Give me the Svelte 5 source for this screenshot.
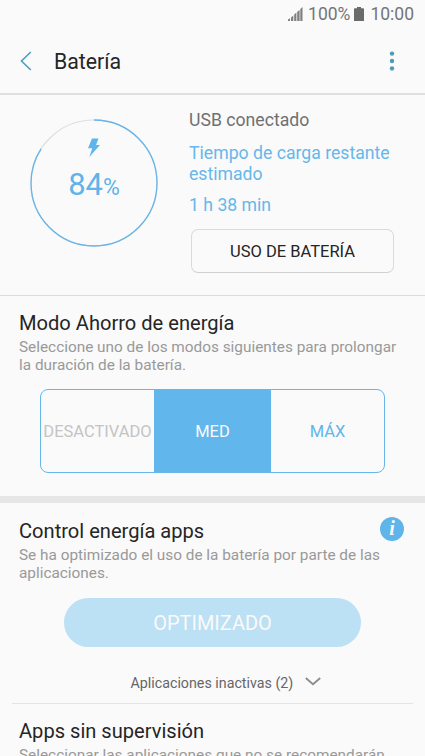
<script lang="ts">
    const level = 84;
    const radius = 63;
    const circumference = 2 * Math.PI * radius;

    const modes = [
        { id: "off", label: "DESACTIVADO" },
        { id: "med", label: "MED" },
        { id: "max", label: "MÁX" },
    ];

    let currentMode = $state("med");
</script>

<div class="screen">
    <div class="status-bar">
        <svg width="15" height="14" viewBox="0 0 15 14" fill="#808080">
            <path d="M0 14v-1.500l2-1.200V14zM3 14v-3.600l2.300-2V14zM6.200 14V7.400l2.200-1.800V14zM9.200 14V4.700l2.400-1.800V14zM12.300 14V2L14.500 0v14z" />
        </svg>
        <span class="percent">100%</span>
        <svg class="battery" width="10" height="14" viewBox="0 0 10 14" fill="#6b6b6b">
            <path d="M3 0h4v1.300h2.300a.7.700 0 0 1 .7.700v12H0V2a.7.700 0 0 1 .7-.7H3z" />
        </svg>
        <span>10:00</span>
    </div>

    <header>
        <svg width="12" height="20" viewBox="0 0 12 20" fill="none" stroke="#4c9fc0" stroke-width="1.600">
            <path d="M10.800 1 1.500 10l9.300 9" />
        </svg>
        <h1>Batería</h1>
        <svg class="more" width="6" height="20" viewBox="0 0 6 20" fill="#4c9bb8">
            <circle cx="3" cy="2.600" r="2.200" />
            <circle cx="3" cy="10" r="2.200" />
            <circle cx="3" cy="17.400" r="2.200" />
        </svg>
    </header>

    <section class="charge">
        <div class="gauge">
            <svg class="ring" width="130" height="130" viewBox="-65 -65 130 130" fill="none">
                <circle r={radius} stroke="#dedede" stroke-width="1.200" />
                <circle
                    r={radius}
                    stroke="#66b5e8"
                    stroke-width="1.300"
                    stroke-dasharray="{(circumference * level) / 100} {circumference}"
                    transform="rotate(-90)"
                />
            </svg>
            <svg class="bolt" width="12" height="20" viewBox="0 0 12 20" fill="#5fb4ea">
                <path d="M4 .5h6.500L8 7h4L1.300 19l3-8.700H0z" />
            </svg>
            <div class="level">{level}<small>%</small></div>
        </div>
        <div class="details">
            <p class="source">USB conectado</p>
            <p class="estimate">Tiempo de carga restante<br />estimado</p>
            <p class="remaining">1 h 38 min</p>
            <button class="usage">USO DE BATERÍA</button>
        </div>
    </section>

    <section class="saving">
        <h2>Modo Ahorro de energía</h2>
        <p>Seleccione uno de los modos siguientes para prolongar<br />la duración de la batería.</p>
        <div class="modes">
            {#each modes as mode}
                <button
                    class="mode {mode.id} {mode.id === currentMode ? 'selected' : ''}"
                    onclick={() => (currentMode = mode.id)}
                >
                    {mode.label}
                </button>
            {/each}
        </div>
    </section>

    <section class="apps">
        <div class="heading">
            <h2>Control energía apps</h2>
            <span class="info">i</span>
        </div>
        <p>Se ha optimizado el uso de la batería por parte de las<br />aplicaciones.</p>
        <button class="optimized" disabled>OPTIMIZADO</button>
        <div class="inactive">
            <span>Aplicaciones inactivas (2)</span>
            <svg width="16" height="9" viewBox="0 0 16 9" fill="none" stroke="#8c8c8c" stroke-width="1.800">
                <path d="m.8 1 7.200 6.300L15.200 1" />
            </svg>
        </div>
    </section>

    <section class="unmonitored">
        <h2>Apps sin supervisión</h2>
        <p>Seleccionar las aplicaciones que no se recomendarán</p>
    </section>
</div>

<style>
    :global(body) {
        background: #fafafa;
        overflow: hidden;
    }

    .screen {
        width: 425px;
        height: 756px;
        overflow: hidden;
        background: #fafafa;
        font-family: Roboto, "Liberation Sans", sans-serif;
        color: #252525;
    }

    h1,
    h2,
    p {
        margin: 0;
        font-weight: 400;
        white-space: nowrap;
    }

    button {
        box-sizing: border-box;
        padding: 0;
        border: 0;
        background: none;
        font-family: inherit;
        white-space: nowrap;
    }

    svg {
        display: block;
        flex: none;
    }

    .status-bar {
        display: flex;
        align-items: center;
        justify-content: flex-end;
        height: 28px;
        padding-right: 11px;
        font-size: 17.5px;
        color: #757575;
    }

    .status-bar .percent {
        margin-left: 5px;
    }

    .status-bar .battery {
        margin: 0 6px 0 4px;
    }

    header {
        display: flex;
        align-items: center;
        box-sizing: border-box;
        height: 67px;
        padding: 1px 30px 0 20px;
        border-bottom: 2px solid #e0e0e0;
    }

    h1 {
        flex: 1;
        margin-left: 22px;
        padding-top: 1px;
        font-size: 21.3px;
    }

    .charge {
        display: flex;
        box-sizing: border-box;
        height: 201px;
        padding: 15px 0 0 29px;
        border-bottom: 1px solid #dcdcdc;
    }

    .gauge {
        display: grid;
        justify-items: center;
        align-content: start;
        width: 130px;
        height: 150px;
        margin-top: 8px;
    }

    .ring {
        grid-area: 1 / 1 / 3 / 2;
    }

    .bolt {
        grid-area: 1 / 1;
        margin-top: 20px;
    }

    .level {
        grid-area: 2 / 1;
        height: 84px;
        font-size: 31px;
        line-height: 47px;
        color: #5fb4ea;
    }

    .level small {
        font-size: 23px;
    }

    .details {
        margin-left: 30px;
        font-size: 17.65px;
        line-height: 21px;
        color: #66b7ea;
    }

    .source {
        color: #707070;
    }

    .estimate {
        margin-top: 12px;
    }

    .remaining {
        margin-top: 10px;
    }

    .usage {
        width: 203px;
        height: 44px;
        margin: 13px 0 0 2px;
        padding-top: 1px;
        border: 1px solid #dadada;
        border-bottom: 1.5px solid #d0d0d0;
        border-radius: 7px;
        font-size: 16.5px;
        color: #252525;
    }

    h2 {
        font-size: 20.1px;
        line-height: 24px;
    }

    .saving,
    .apps,
    .unmonitored {
        box-sizing: border-box;
        padding-left: 19px;
    }

    .saving p,
    .apps p,
    .unmonitored p {
        font-size: 15.35px;
        line-height: 18px;
        color: #999;
    }

    .saving {
        height: 207px;
        padding-top: 15px;
        border-bottom: 7px solid #e6e6e6;
    }

    .saving p {
        margin-top: 3px;
    }

    .modes {
        display: grid;
        grid-template-columns: 113px 117px 1fr;
        box-sizing: border-box;
        width: 345px;
        height: 84px;
        margin: 15px 0 0 21px;
        overflow: hidden;
        border: 1.5px solid #66b7ea;
        border-radius: 8px;
    }

    .mode {
        font-size: 16.5px;
        color: #62b6ea;
    }

    .mode.off {
        color: #c4c4c4;
    }

    .mode.selected {
        background: #61b6ec;
        color: #fafafa;
    }

    .apps {
        height: 200px;
        padding-top: 16px;
    }

    .heading {
        display: flex;
        justify-content: space-between;
        height: 27px;
        padding-right: 21px;
    }

    .info {
        width: 24px;
        height: 24px;
        margin-top: -2px;
        border-radius: 50%;
        background: #5fb4ea;
        font: italic bold 20px/23px "Liberation Serif", serif;
        text-align: center;
        color: #fafafa;
    }

    .optimized {
        display: block;
        width: 297px;
        height: 49px;
        margin: 16px 0 0 45px;
        padding-top: 1px;
        border-radius: 25px;
        background: #bce0f4;
        font-size: 20px;
        color: #fafafa;
    }

    .inactive {
        display: flex;
        align-items: center;
        gap: 12px;
        height: 20px;
        margin: 26px 0 0 111.500px;
        font-size: 14.25px;
        color: #666;
    }

    .inactive svg {
        margin-top: -3px;
    }

    .unmonitored {
        width: 401px;
        margin-left: 12px;
        padding: 15px 0 0 7px;
        border-top: 1px solid #e4e4e4;
    }

    .unmonitored p {
        margin-top: 3px;
    }
</style>
